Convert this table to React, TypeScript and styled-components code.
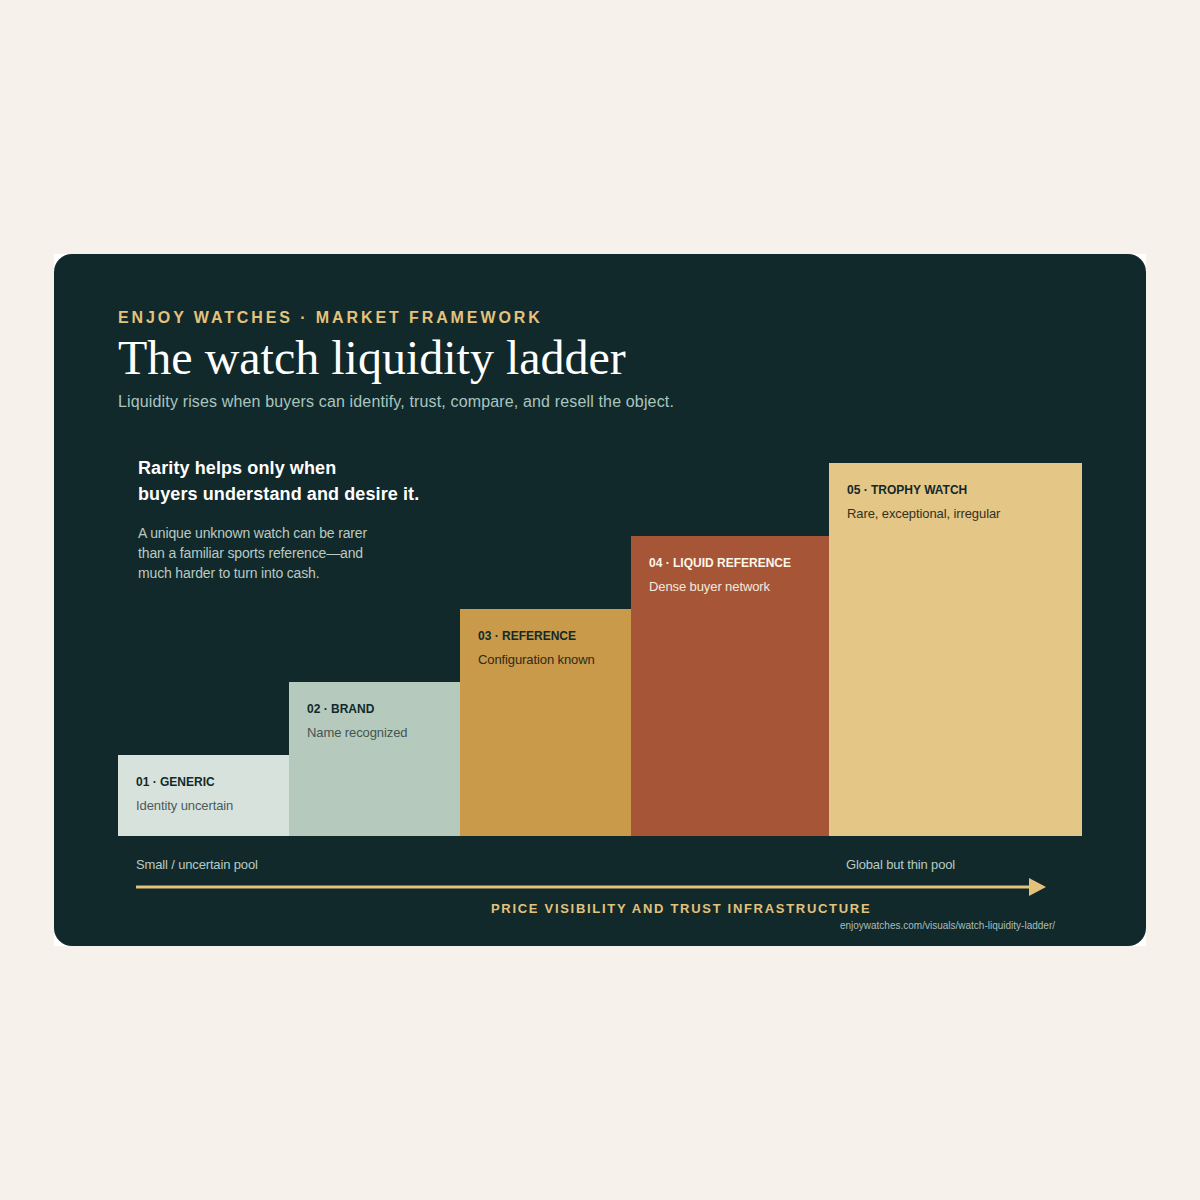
import React from "react";
import styled, { createGlobalStyle } from "styled-components";

const GlobalStyle = createGlobalStyle`
  * { box-sizing: border-box; }
  html, body { margin: 0; padding: 0; }
  body {
    background: #f6f1ea;
    font-family: "Liberation Sans", Arial, sans-serif;
  }
`;

const Page = styled.div`
  min-height: 1200px;
  display: flex;
  align-items: center;
  justify-content: center;
`;

const Frame = styled.div`
  width: 1092px;
  height: 692px;
  background: #ffffff;
`;

const Card = styled.section`
  height: 100%;
  background: #12292b;
  border-radius: 18px;
  padding: 54px 64px 0;
  display: flex;
  flex-direction: column;
`;

const Eyebrow = styled.div`
  font-size: 16px;
  line-height: 20px;
  font-weight: 700;
  letter-spacing: 2.9px;
  color: #e4c27b;
`;

const Title = styled.h1`
  margin: 2px 0 0;
  font-family: "Liberation Serif", "Times New Roman", serif;
  font-weight: 400;
  font-size: 48px;
  line-height: 56px;
  color: #ffffff;
`;

const Lede = styled.p`
  margin: 5px 0 0;
  font-size: 16px;
  line-height: 22px;
  letter-spacing: 0.15px;
  color: #a9c5bf;
`;

const Chart = styled.div`
  margin-top: 42px;
  height: 381px;
  display: grid;
  grid-template-columns: 171px 171px 171px 198px 253px;
  grid-template-rows: 1fr;
`;

const Callout = styled.div`
  grid-column: 1 / 4;
  grid-row: 1;
  align-self: start;
  padding-left: 20px;
  position: relative;
  z-index: 1;
`;

const CalloutTitle = styled.h2`
  margin: 0;
  font-size: 18px;
  line-height: 26px;
  font-weight: 700;
  letter-spacing: 0.1px;
  color: #ffffff;
`;

const CalloutText = styled.p`
  margin: 16px 0 0;
  font-size: 14px;
  line-height: 20px;
  letter-spacing: -0.15px;
  color: #b9c9c3;
`;

const Bar = styled.div<{ $col: number; $height: number; $bg: string; $ink: string; $sub: string }>`
  grid-column: ${({ $col }) => $col};
  grid-row: 1;
  align-self: end;
  height: ${({ $height }) => $height}px;
  background: ${({ $bg }) => $bg};
  padding: 19px 18px 0;
  color: ${({ $ink }) => $ink};

  span {
    color: ${({ $sub }) => $sub};
  }
`;

const BarLabel = styled.div`
  font-size: 12px;
  line-height: 16px;
  font-weight: 700;
`;

const BarNote = styled.span`
  display: block;
  margin-top: 8px;
  font-size: 13px;
  line-height: 16px;
  letter-spacing: -0.1px;
`;

const Axis = styled.div`
  margin: 20px 0 0 18px;
  width: 910px;
`;

const AxisEnds = styled.div`
  display: grid;
  grid-template-columns: 710px 1fr;
  font-size: 13px;
  line-height: 18px;
  letter-spacing: -0.15px;
  color: #b8cbc5;
`;

const Arrow = styled.svg`
  display: block;
  margin-top: 4px;
`;

const AxisTitle = styled.div`
  margin: 4px 0 0 355px;
  font-size: 13px;
  line-height: 18px;
  font-weight: 700;
  letter-spacing: 1.7px;
  color: #e4c27b;
`;

const Source = styled.div`
  margin-top: 1px;
  padding-right: 27px;
  text-align: right;
  font-size: 10px;
  line-height: 14px;
  color: #a9bdb8;
`;

const STEPS = [
  { n: "01", name: "GENERIC", note: "Identity uncertain", h: 81, bg: "#d8e2dd", ink: "#12292b", sub: "#4b5b59" },
  { n: "02", name: "BRAND", note: "Name recognized", h: 154, bg: "#b6c9bd", ink: "#12292b", sub: "#44564f" },
  { n: "03", name: "REFERENCE", note: "Configuration known", h: 227, bg: "#c89a49", ink: "#12292b", sub: "#2e2a1d" },
  { n: "04", name: "LIQUID REFERENCE", note: "Dense buyer network", h: 300, bg: "#a75537", ink: "#fff6ea", sub: "#f6e8da" },
  { n: "05", name: "TROPHY WATCH", note: "Rare, exceptional, irregular", h: 373, bg: "#e4c686", ink: "#12292b", sub: "#34311f" },
];

export default function App() {
  return (
    <Page>
      <GlobalStyle />
      <Frame>
        <Card>
          <Eyebrow>ENJOY WATCHES · MARKET FRAMEWORK</Eyebrow>
          <Title>The watch liquidity ladder</Title>
          <Lede>Liquidity rises when buyers can identify, trust, compare, and resell the object.</Lede>

          <Chart>
            <Callout>
              <CalloutTitle>
                Rarity helps only when
                <br />
                buyers understand and desire it.
              </CalloutTitle>
              <CalloutText>
                A unique unknown watch can be rarer
                <br />
                than a familiar sports reference—and
                <br />
                much harder to turn into cash.
              </CalloutText>
            </Callout>
            {STEPS.map((s, i) => (
              <Bar key={s.n} $col={i + 1} $height={s.h} $bg={s.bg} $ink={s.ink} $sub={s.sub}>
                <BarLabel>
                  {s.n} · {s.name}
                </BarLabel>
                <BarNote>{s.note}</BarNote>
              </Bar>
            ))}
          </Chart>

          <Axis>
            <AxisEnds>
              <div>Small / uncertain pool</div>
              <div>Global but thin pool</div>
            </AxisEnds>
            <Arrow width="910" height="18" viewBox="0 0 910 18">
              <line x1="0" y1="9" x2="895" y2="9" stroke="#e4c27b" strokeWidth="3" />
              <polygon points="893,0 910,9 893,18" fill="#e4c27b" />
            </Arrow>
            <AxisTitle>PRICE VISIBILITY AND TRUST INFRASTRUCTURE</AxisTitle>
          </Axis>
          <Source>enjoywatches.com/visuals/watch-liquidity-ladder/</Source>
        </Card>
      </Frame>
    </Page>
  );
}
